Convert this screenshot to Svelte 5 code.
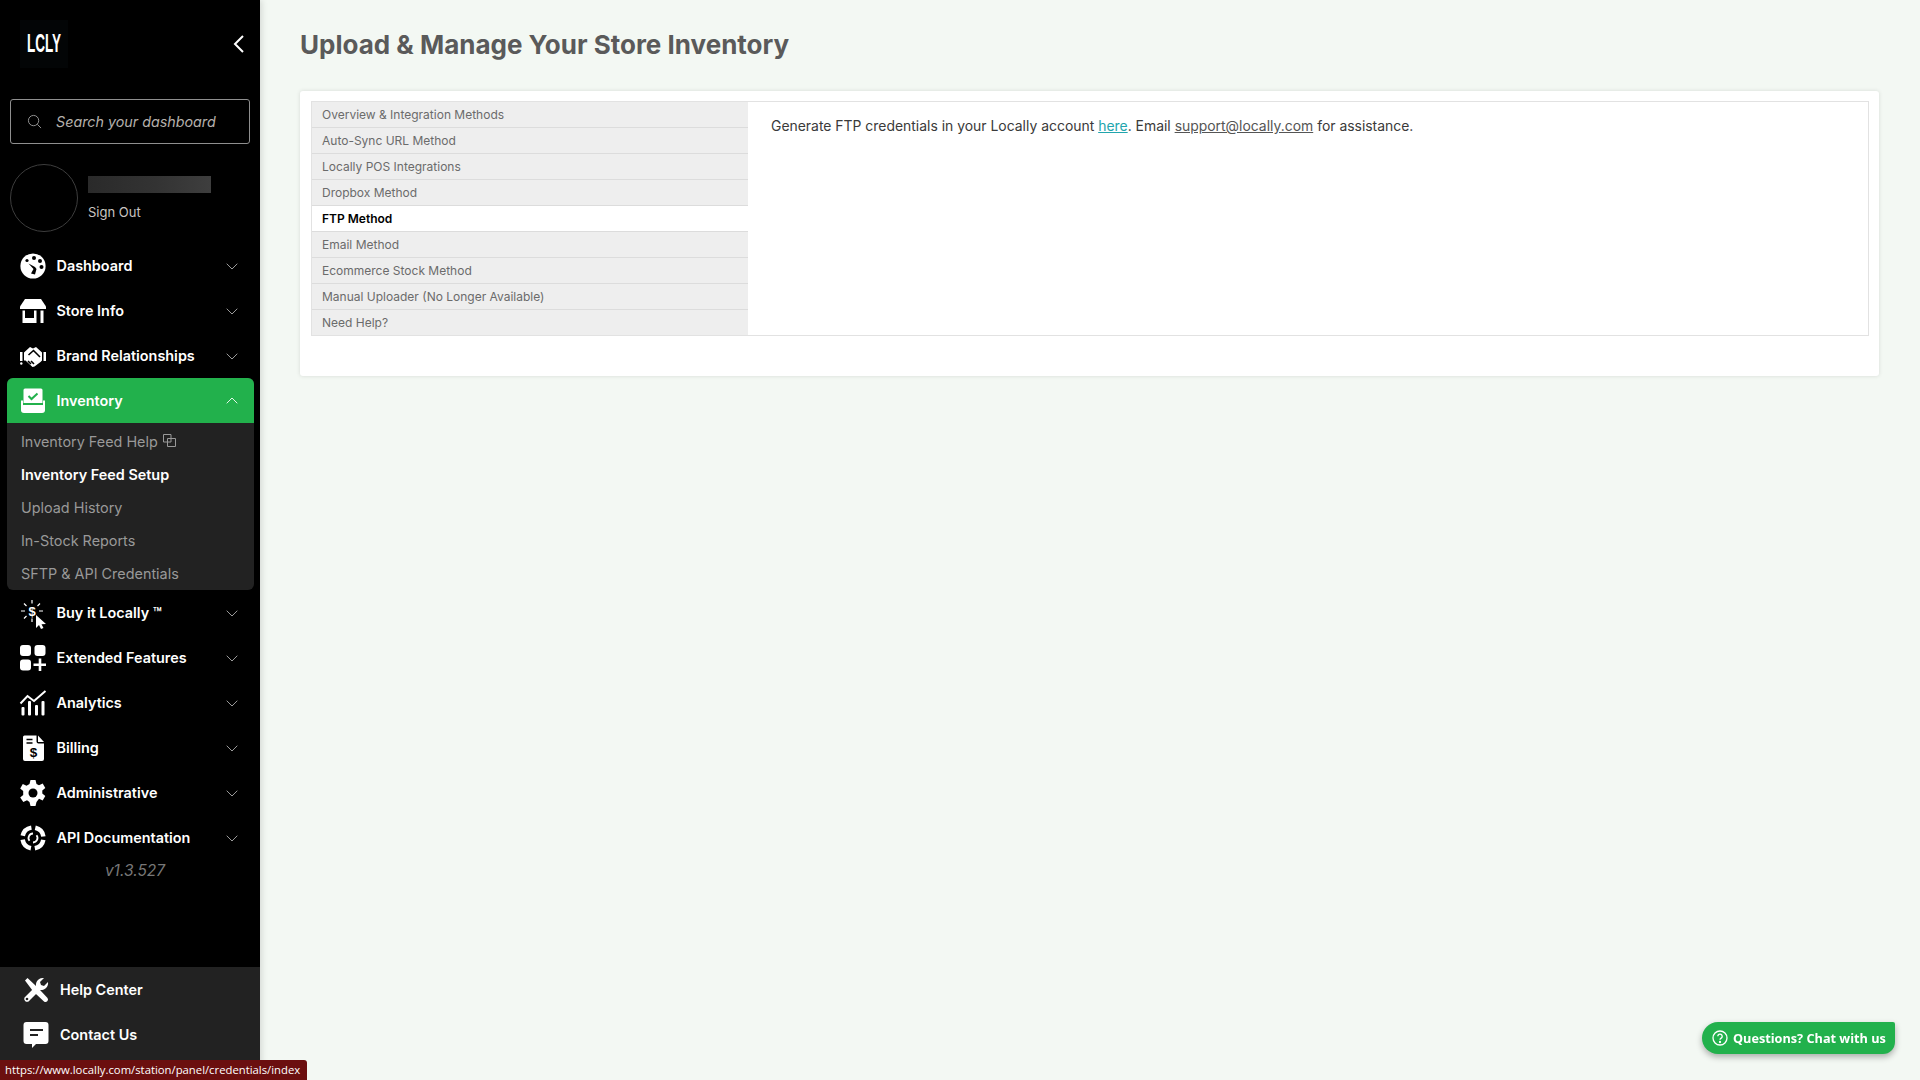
<script>
  const navTop = [
    { id: 'dashboard', label: 'Dashboard' },
    { id: 'store', label: 'Store Info' },
    { id: 'brand', label: 'Brand Relationships' }
  ];
  const navBottom = [
    { id: 'buy', label: 'Buy it Locally ™' },
    { id: 'extended', label: 'Extended Features' },
    { id: 'analytics', label: 'Analytics' },
    { id: 'billing', label: 'Billing' },
    { id: 'admin', label: 'Administrative' },
    { id: 'api', label: 'API Documentation' }
  ];
  const subItems = ['Upload History', 'In-Stock Reports', 'SFTP & API Credentials'];
  const tabs = [
    'Overview & Integration Methods',
    'Auto-Sync URL Method',
    'Locally POS Integrations',
    'Dropbox Method',
    'FTP Method',
    'Email Method',
    'Ecommerce Stock Method',
    'Manual Uploader (No Longer Available)',
    'Need Help?'
  ];
  let activeTab = $state('FTP Method');
</script>

{#snippet icon(id)}
  <svg class="nav-icon" viewBox="0 0 26 26" fill="#fff">
    {#if id === 'dashboard'}
      <circle cx="13" cy="13" r="12.6" />
      <circle cx="14" cy="5" r="2" fill="#000" />
      <circle cx="20" cy="8" r="2" fill="#000" />
      <circle cx="21.5" cy="14" r="2" fill="#000" />
      <circle cx="7" cy="7.500" r="1.600" fill="#000" />
      <path d="M8.500 10.500 13.500 16l-2.500 4.500 4 1 1.500-5.500-1.500-2z" fill="#000" />
    {:else if id === 'store'}
      <path d="M5 1h16l5 7.5V11H0V8.500z" />
      <path d="M2.500 12.500h14V25h-14zM5 12.500v7.500h9v-7.500z" fill-rule="evenodd" />
      <rect x="20.500" y="12.500" width="3" height="12.500" />
    {:else if id === 'brand'}
      <rect x="0" y="9" width="2.500" height="9" />
      <circle cx="1.300" cy="20.500" r="1.200" />
      <rect x="23.500" y="9" width="2.500" height="9" />
      <path d="M4 9.500 10 4l3 1.500L16 4l6 5.500v8l-1.500 1.500-6 4.500-2 .5-7-6.500H4z" />
      <path d="M8.500 12 13.500 7.500 20 14M11 21l-3-3M14 21l-3-3" fill="none" stroke="#000" stroke-width="1.600" />
    {:else if id === 'inventory'}
      <path d="M5 0.500h16a1.500 1.500 0 0 1 1.500 1.500V15h-19V2A1.500 1.500 0 0 1 5 0.500z" />
      <path d="M8.500 8l3 3 6-5.500" fill="none" stroke="#22b14c" stroke-width="2" />
      <path d="M2 12.500V22a2 2 0 0 0 2 2h18a2 2 0 0 0 2-2V12.500" fill="none" stroke="#fff" stroke-width="2" />
      <rect x="1.500" y="17" width="23" height="7" rx="2" />
    {:else if id === 'buy'}
      <text x="12" y="15.500" text-anchor="middle" font-size="13" font-family="Liberation Sans, sans-serif">$</text>
      <path d="M12 0v3.500M12 18.500v3.500M1 11h4M19 11h4M4 3.500l2.500 2.500M20 3.500l-2.500 2.500M4 18.500l2.500-2.500" stroke="#fff" stroke-width="1.200" fill="none" />
      <path d="M16 15 26 24l-4.500.2 2 3.800-2.500 1-2-4-3 3z" />
    {:else if id === 'extended'}
      <rect x="0" y="0" width="11" height="11" rx="3" />
      <rect x="14.500" y="0" width="11" height="11" rx="3" />
      <rect x="0" y="14.500" width="11" height="11" rx="3" />
      <path d="M20 13.500v12.500M13.500 19.700h12.500" stroke="#fff" stroke-width="2.600" fill="none" />
    {:else if id === 'analytics'}
      <path d="M0.500 13.500 7.500 6l6.500 5L25.500 1" fill="none" stroke="#fff" stroke-width="2" />
      <rect x="1.500" y="17" width="3" height="8.500" rx="1" />
      <rect x="8" y="11" width="3" height="14.500" rx="1" />
      <rect x="15" y="15" width="3" height="10.500" rx="1" />
      <rect x="21.500" y="11" width="3" height="14.500" rx="1" />
    {:else if id === 'billing'}
      <path d="M4.500 0.500h12v6a2 2 0 0 0 2 2H24V24a2 2 0 0 1-2 2H5a2 2 0 0 1-2-2V2a1.500 1.500 0 0 1 1.500-1.500z" />
      <path d="M18 0.500 24 7h-6z" />
      <path d="M6.500 4.500h6M6.500 8h6" stroke="#000" stroke-width="1.500" />
      <text x="13.500" y="22" text-anchor="middle" font-size="13.500" font-weight="700" fill="#000" font-family="Liberation Sans, sans-serif">$</text>
    {:else if id === 'admin'}
      <path d="M10.500 0h5l1 4 2.500 1.200 3.700-1.600 2.600 4.400-3 2.500v3l3 2.500-2.600 4.400-3.700-1.600L16.500 22l-1 4h-5l-1-4-2.500-1.700-3.700 1.600L.2 17.500l3-2.500V11l-3-2.500L2.800 4.100 6.500 5.700 9.500 4z" />
      <circle cx="13" cy="13" r="4.500" fill="#000" />
    {:else if id === 'api'}
      <circle cx="13" cy="13" r="10.500" fill="none" stroke="#fff" stroke-width="4.500" stroke-dasharray="12.500 4" stroke-dashoffset="-2" />
      <path d="M13 8.500a4.500 4.500 0 0 0-3.500 7.300M13 17.500a4.500 4.500 0 0 0 3.500-7.300" fill="none" stroke="#fff" stroke-width="1.800" />
    {:else if id === 'help'}
      <path d="M2 3.500 4.500 1l9 8.500 4 4 7 7.500a2.500 2.500 0 0 1-3.500 3.500l-7.500-7-4-4z" />
      <path d="M25 5l-4 4-3-1-1-3 4-4a7 7 0 0 0-8 8L1.500 20.500a3 3 0 0 0 4 4L17 13a7 7 0 0 0 8-8z" />
      <circle cx="4" cy="22" r="1.300" fill="#222" />
    {:else if id === 'contact'}
      <path d="M3.500 0h19A3 3 0 0 1 25.500 3v16a3 3 0 0 1-3 3H13l-4 4v-4H3.500a3 3 0 0 1-3-3V3a3 3 0 0 1 3-3z" />
      <path d="M7 8h13M7 13h8" stroke="#222" stroke-width="2.200" />
    {/if}
  </svg>
{/snippet}

{#snippet chevron(up)}
  <svg class="chev" viewBox="0 0 12 7" fill="none" stroke="currentColor" stroke-width="1">
    <path d={up ? 'M.7 6.300 6 1l5.300 5.300' : 'M.7 .7 6 6l5.300-5.300'} />
  </svg>
{/snippet}

{#snippet navRow(item)}
  <a class="nav-row" href="#top">
    {@render icon(item.id)}
    <span class="nav-label">{item.label}</span>
    {@render chevron(false)}
  </a>
{/snippet}

<div class="layout">
  <aside class="sidebar">
    <div class="brand-row">
      <div class="logo-box"><span class="logo">LCLY</span></div>
      <svg class="collapse" viewBox="0 0 12 20" fill="none" stroke="#fff" stroke-width="2">
        <path d="M10 2 2 10l8 8" />
      </svg>
    </div>

    <div class="search">
      <svg viewBox="0 0 16 16" fill="none" stroke="#999" stroke-width="1">
        <circle cx="7" cy="7" r="5.500" />
        <path d="m11 11 4 4" />
      </svg>
      <span>Search your dashboard</span>
    </div>

    <div class="user">
      <div class="avatar"></div>
      <div class="user-text">
        <div class="redacted"></div>
        <a href="#top">Sign Out</a>
      </div>
    </div>

    <nav class="nav">
      {#each navTop as item}
        {@render navRow(item)}
      {/each}

      <div class="group">
        <a class="nav-row active" href="#top">
          {@render icon('inventory')}
          <span class="nav-label">Inventory</span>
          {@render chevron(true)}
        </a>
        <div class="sub">
          <a href="#top">
            Inventory Feed Help
            <svg class="ext" viewBox="0 0 13 13" fill="none" stroke="currentColor" stroke-width="1">
              <path d="M.5.500h7.500v7.500H.5zM4.500 4.500h8v8h-8z" />
            </svg>
          </a>
          <a class="current" href="#top">Inventory Feed Setup</a>
          {#each subItems as label}
            <a href="#top">{label}</a>
          {/each}
        </div>
      </div>

      {#each navBottom as item}
        {@render navRow(item)}
      {/each}
    </nav>

    <div class="version">v1.3.527</div>

    <div class="side-footer">
      <a class="foot-row" href="#top">{@render icon('help')}<span>Help Center</span></a>
      <a class="foot-row" href="#top">{@render icon('contact')}<span>Contact Us</span></a>
    </div>
  </aside>

  <main class="content">
    <h1>Upload &amp; Manage Your Store Inventory</h1>
    <section class="card">
      <div class="tabs">
        <ul class="tab-list">
          {#each tabs as tab}
            <li>
              <button class:selected={activeTab === tab} onclick={() => (activeTab = tab)}>{tab}</button>
            </li>
          {/each}
        </ul>
        <div class="tab-body">
          <p>
            Generate FTP credentials in your Locally account
            <a class="teal" href="#top">here</a>. Email
            <a class="mail" href="#top">support@locally.com</a> for assistance.
          </p>
        </div>
      </div>
    </section>
  </main>
</div>

<button class="chat">
  <svg viewBox="0 0 16 16" fill="none" stroke="#fff" stroke-width="1.300">
    <circle cx="8" cy="8" r="7" />
    <path d="M5.800 6.200a2.200 2.200 0 1 1 3.400 1.900c-.8.500-1.200.9-1.200 1.700" />
    <circle cx="8" cy="12" r=".5" fill="#fff" />
  </svg>
  Questions? Chat with us
</button>

<div class="status">https://www.locally.com/station/panel/credentials/index</div>

<style>
  :global(body) {
    margin: 0;
    background: #f3f8f3;
    font-family: Inter, "Liberation Sans", sans-serif;
  }

  a {
    text-decoration: none;
    color: inherit;
  }

  .layout {
    display: flex;
    height: 1080px;
    overflow: hidden;
  }

  .sidebar {
    width: 260px;
    flex: none;
    background: #000;
    color: #fff;
    display: flex;
    flex-direction: column;
    box-shadow: 2px 0 6px rgba(0, 0, 0, 0.12);
  }

  .brand-row {
    height: 87px;
    display: flex;
    align-items: center;
    justify-content: space-between;
    padding: 0 15px 0 20px;
  }

  .logo-box {
    width: 48px;
    height: 48px;
    background: #030506;
    display: flex;
    align-items: center;
    padding-left: 7px;
    box-sizing: border-box;
    overflow: hidden;
  }

  .logo {
    font-family: "Liberation Sans", sans-serif;
    font-size: 26px;
    font-weight: 700;
    transform: scaleX(0.52);
    transform-origin: left center;
  }

  .collapse {
    width: 12px;
    height: 20px;
  }

  .search {
    margin: 12px 10px 0;
    height: 43px;
    border: 1px solid #8f8f8f;
    border-radius: 3px;
    display: flex;
    align-items: center;
    gap: 14px;
    padding-left: 16px;
    font-size: 14.300px;
    font-style: italic;
    color: #b5b0ac;
  }

  .search svg {
    width: 15px;
    height: 15px;
  }

  .user {
    display: flex;
    align-items: center;
    gap: 10px;
    margin: 20px 10px 0;
  }

  .avatar {
    width: 66px;
    height: 66px;
    border: 1px solid #3d3d3d;
    border-radius: 50%;
  }

  .redacted {
    width: 123px;
    height: 17px;
    background: linear-gradient(90deg, #2a2a2a, #333 55%, #3e3e3e);
    margin-bottom: 8px;
  }

  .user-text a {
    font-size: 13px;
    color: #c9c5c1;
  }

  .nav {
    margin-top: 11px;
    display: flex;
    flex-direction: column;
  }

  .nav-row {
    height: 45px;
    display: flex;
    align-items: center;
    padding: 0 22px 0 20px;
    font-size: 14.400px;
    font-weight: 600;
    color: #fff;
  }

  .nav-icon {
    width: 26px;
    height: 26px;
    flex: none;
    overflow: visible;
  }

  .nav-label {
    margin-left: 10.500px;
    flex: 1;
  }

  .chev {
    width: 12px;
    height: 7px;
    margin-top: 2px;
    color: #9a9a9a;
  }

  .group {
    margin: 0 6px 0 7px;
    background: #222;
    border-radius: 6px;
    overflow: hidden;
  }

  .nav-row.active {
    background: #22b14c;
    padding: 0 16px 0 13px;
    color: #fff;
  }

  .nav-row.active .chev {
    margin-top: 0;
    color: #e4f5e9;
  }

  .sub {
    padding: 2px 14px 0;
    display: flex;
    flex-direction: column;
    height: 167px;
    box-sizing: border-box;
    font-size: 14.400px;
    color: #999;
  }

  .sub a {
    height: 33.500px;
    display: flex;
    align-items: center;
    gap: 5px;
  }

  .sub a.current {
    color: #fff;
    font-weight: 600;
    font-size: 14.400px;
  }

  .ext {
    width: 13px;
    height: 13px;
    margin-top: -3px;
  }

  .version {
    margin-top: 1px;
    text-align: center;
    padding-left: 10px;
    font-style: italic;
    font-size: 15.500px;
    color: #777;
  }

  .side-footer {
    margin-top: auto;
    height: 113px;
    background: #222;
  }

  .foot-row {
    height: 45px;
    display: flex;
    align-items: center;
    gap: 11px;
    padding-left: 23px;
    font-size: 14.400px;
    font-weight: 600;
  }

  .content {
    flex: 1;
    padding: 0 41px 0 40px;
    min-width: 0;
  }

  h1 {
    margin: 0;
    height: 91px;
    line-height: 90px;
    font-size: 26px;
    font-weight: 700;
    color: #5a5a5a;
  }

  .card {
    background: #fff;
    border-radius: 3px;
    box-shadow: 0 0 4px rgba(0, 0, 0, 0.12);
    padding: 10px 10px 40px 11px;
  }

  .tabs {
    display: flex;
    height: 235px;
    box-sizing: border-box;
    border: 1px solid #e2e2e2;
  }

  .tab-list {
    list-style: none;
    margin: 0;
    padding: 0;
    width: 436px;
    flex: none;
  }

  .tab-list li {
    height: 26px;
    box-sizing: border-box;
    border-bottom: 1px solid #dcdcdc;
  }

  .tab-list li:last-child {
    height: 25px;
    border-bottom: 0;
  }

  .tab-list button {
    display: block;
    width: 100%;
    height: 100%;
    border: 0;
    background: #eeeeee;
    padding: 0 0 0 10px;
    text-align: left;
    font-family: inherit;
    font-size: 12px;
    color: #6b6b6b;
  }

  .tab-list button.selected {
    background: #fff;
    color: #000;
    font-weight: 600;
  }

  .tab-body {
    flex: 1;
    padding: 16px 23px;
    font-size: 13.930px;
    color: #3a3a3a;
  }

  .tab-body p {
    margin: 0;
  }

  .teal {
    color: #22a5ad;
    text-decoration: underline;
  }

  .mail {
    color: #555;
    text-decoration: underline;
  }

  .chat {
    position: fixed;
    right: 25px;
    bottom: 26px;
    height: 32px;
    width: 193px;
    border: 0;
    padding: 0 0 0 10px;
    display: flex;
    align-items: center;
    gap: 5px;
    background: #22b14c;
    color: #fff;
    font-family: "Open Sans", sans-serif;
    font-size: 12.700px;
    font-weight: 700;
    white-space: nowrap;
    border-radius: 16px 2px 12px 16px;
    box-shadow: 0 3px 6px rgba(0, 0, 0, 0.3);
  }

  .chat svg {
    flex: none;
    width: 16px;
    height: 16px;
  }

  .status {
    position: fixed;
    left: 0;
    bottom: 0;
    width: 307px;
    height: 20px;
    box-sizing: border-box;
    padding-left: 5px;
    background: #6b0f0f;
    color: #fff;
    border-radius: 0 3px 0 0;
    font-family: "Open Sans", sans-serif;
    font-size: 11.300px;
    line-height: 20px;
    white-space: nowrap;
  }
</style>
